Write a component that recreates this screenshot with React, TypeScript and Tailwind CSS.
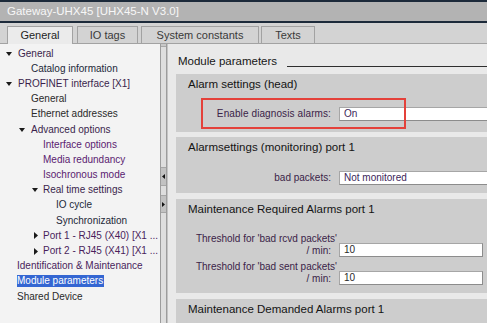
import React from "react";

const Down = () => (
  <svg width="6" height="4" viewBox="0 0 6 4" className="block">
    <polygon points="0,0 6,0 3,4" fill="#1a1a1a" />
  </svg>
);
const Right = () => (
  <svg width="4" height="7" viewBox="0 0 4 7" className="block">
    <polygon points="0,0 4,3.5 0,7" fill="#1a1a1a" />
  </svg>
);

type RowProps = {
  pad: string;
  arrow?: "down" | "right";
  arrowW?: string;
  text: string;
  color: string;
  selected?: boolean;
};

function Row({ pad, arrow, arrowW, text, color, selected }: RowProps) {
  return (
    <div className={`flex items-center h-[15.2px] whitespace-nowrap ${pad}`}>
      {arrow && (
        <span className={`flex items-center shrink-0 ${arrowW}`}>
          {arrow === "down" ? <Down /> : <Right />}
        </span>
      )}
      {selected ? (
        <span className="bg-[#3466d2] text-white leading-[12px] h-[12px] pr-[1px]">{text}</span>
      ) : (
        <span className={color}>{text}</span>
      )}
    </div>
  );
}

function Input({ value, w, color }: { value: string; w: string; color: string }) {
  return (
    <div
      className={`h-[14px] ${w} bg-white border border-[#a6a6a6] border-b-[#8c8c8c] border-r-[#8c8c8c] flex items-center pl-[4px] text-[10px] leading-[12px] shrink-0 ${color}`}
    >
      {value}
    </div>
  );
}

export default function App() {
  return (
    <div className="w-[487px] h-[323px] overflow-hidden flex flex-col bg-[#e9e9e9] font-['Liberation_Sans',Arial,sans-serif]">
      {/* title bar */}
      <div className="h-[23px] shrink-0 border-t-2 border-b-2 border-[#1c2a3a] bg-[#b3b3b3] flex items-center pl-[7px] text-[11.5px] text-[#f7f7f7]">
        Gateway-UHX45 [UHX45-N V3.0]
      </div>
      {/* tabs */}
      <div className="h-[21px] shrink-0 bg-[#d3d3d3] border-b border-[#a2a2a2] flex items-end pl-[7px] text-[11px] text-[#1e1e1e]">
        <div className="w-[66px] h-[18px] -mb-px bg-[#ebebeb] border border-b-0 border-[#a2a2a2] flex items-center justify-center relative z-10">
          General
        </div>
        <div className="ml-[4px] w-[61px] h-[17px] border border-b-0 border-[#a2a2a2] flex items-center justify-center text-[#3a3a3a]">
          IO tags
        </div>
        <div className="ml-[3px] w-[118px] h-[17px] border border-b-0 border-[#a2a2a2] flex items-center justify-center text-[#3a3a3a]">
          System constants
        </div>
        <div className="ml-[2px] w-[54px] h-[17px] border border-b-0 border-[#a2a2a2] flex items-center justify-center text-[#3a3a3a]">
          Texts
        </div>
      </div>
      {/* body */}
      <div className="flex flex-1 min-h-0">
        {/* tree */}
        <div className="w-[160px] shrink-0 bg-[#f3f3f3] pt-[2px] text-[10px] leading-[12px] overflow-hidden">
          <Row pad="pl-[6px]" arrow="down" arrowW="w-[12px]" text="General" color="text-[#3a1f4c]" />
          <Row pad="pl-[31px]" text="Catalog information" color="text-[#1c2838]" />
          <Row pad="pl-[6px]" arrow="down" arrowW="w-[12px]" text="PROFINET interface [X1]" color="text-[#3a1f4c]" />
          <Row pad="pl-[31px]" text="General" color="text-[#2a2a2a]" />
          <Row pad="pl-[31px]" text="Ethernet addresses" color="text-[#2a2a2a]" />
          <Row pad="pl-[19px]" arrow="down" arrowW="w-[12px]" text="Advanced options" color="text-[#3a1f4c]" />
          <Row pad="pl-[43px]" text="Interface options" color="text-[#5a2170]" />
          <Row pad="pl-[43px]" text="Media redundancy" color="text-[#5a2170]" />
          <Row pad="pl-[43px]" text="Isochronous mode" color="text-[#5a2170]" />
          <Row pad="pl-[32px]" arrow="down" arrowW="w-[11px]" text="Real time settings" color="text-[#3a1f4c]" />
          <Row pad="pl-[56px]" text="IO cycle" color="text-[#1c2838]" />
          <Row pad="pl-[56px]" text="Synchronization" color="text-[#1c2838]" />
          <Row pad="pl-[34px]" arrow="right" arrowW="w-[9px]" text="Port 1 - RJ45 (X40) [X1 ..." color="text-[#4a1e5c]" />
          <Row pad="pl-[34px]" arrow="right" arrowW="w-[9px]" text="Port 2 - RJ45 (X41) [X1 ..." color="text-[#4a1e5c]" />
          <Row pad="pl-[17px]" text="Identification & Maintenance" color="text-[#4a1e5c]" />
          <Row pad="pl-[17px]" text="Module parameters" color="" selected />
          <Row pad="pl-[17px]" text="Shared Device" color="text-[#2a2a2a]" />
        </div>
        {/* splitter */}
        <div className="w-[7px] shrink-0 border-l border-r border-[#9c9c9c] bg-[#dedede] flex flex-col">
          <div className="h-[3px] bg-[#c8c8c8] border-b border-[#a8a8a8]" />
          <div className="mt-[120px] h-[19px] bg-[#c2c2c2] border-y border-[#a6a6a6] flex items-center justify-center">
            <svg width="3" height="5" viewBox="0 0 3 5">
              <polygon points="3,0 0,2.5 3,5" fill="#111" />
            </svg>
          </div>
          <div className="mt-[9px] h-[18px] bg-[#c2c2c2] border-y border-[#a6a6a6] flex items-center justify-center">
            <svg width="3" height="5" viewBox="0 0 3 5">
              <polygon points="0,0 3,2.5 0,5" fill="#111" />
            </svg>
          </div>
        </div>
        {/* right panel */}
        <div className="flex-1 min-w-0 relative overflow-hidden bg-[#e9e9e9] border-l border-[#c4c4c4]">
          <div className="flex items-end pl-[10px] pt-[11px]">
            <span className="text-[11.5px] leading-[13px] text-[#161616] whitespace-nowrap">Module parameters</span>
            <div className="flex-1 ml-[10px] mb-[1px] h-[1.5px] bg-[#2e2e2e]" />
          </div>
          <div className="ml-[8px] mt-[6px] w-[330px] text-[10px] leading-[12px] text-[#3a2348]">
            {/* section 1 */}
            <div className="h-[58px] bg-[#cdcdcd] pt-[4px] pl-[12px]">
              <div className="text-[11.5px] leading-[13px] text-[#141414]">Alarm settings (head)</div>
              <div className="mt-[16px] flex items-center -ml-[12px]">
                <div className="w-[155px] text-right tracking-[0.1px]">Enable diagnosis alarms:</div>
                <div className="ml-[8px]">
                  <Input value="On" w="w-[160px]" color="text-[#3c1f5a]" />
                </div>
              </div>
            </div>
            {/* section 2 */}
            <div className="mt-[5px] h-[56px] bg-[#cdcdcd] pt-[4px] pl-[12px]">
              <div className="text-[11.5px] leading-[13px] text-[#141414]">Alarmsettings (monitoring) port 1</div>
              <div className="mt-[17px] flex items-center -ml-[12px]">
                <div className="w-[155px] text-right">bad packets:</div>
                <div className="ml-[8px]">
                  <Input value="Not monitored" w="w-[160px]" color="text-[#3c1f5a]" />
                </div>
              </div>
            </div>
            {/* section 3 */}
            <div className="mt-[6px] h-[94px] bg-[#cdcdcd] pt-[4px] pl-[12px]">
              <div className="text-[11.5px] leading-[13px] text-[#141414]">Maintenance Required Alarms port 1</div>
              <div className="mt-[17px] flex items-end -ml-[12px]">
                <div className="w-[155px] flex flex-col items-end">
                  <span className="-mr-[6px] whitespace-nowrap">Threshold for 'bad rcvd packets'</span>
                  <span>/ min:</span>
                </div>
                <div className="ml-[8px]">
                  <Input value="10" w="w-[144px]" color="text-[#2a2a2a]" />
                </div>
              </div>
              <div className="mt-[4px] flex items-end -ml-[12px]">
                <div className="w-[155px] flex flex-col items-end">
                  <span className="-mr-[6px] whitespace-nowrap">Threshold for 'bad sent packets'</span>
                  <span>/ min:</span>
                </div>
                <div className="ml-[8px]">
                  <Input value="10" w="w-[144px]" color="text-[#2a2a2a]" />
                </div>
              </div>
            </div>
            {/* section 4 */}
            <div className="mt-[6px] h-[40px] bg-[#cdcdcd] pt-[4px] pl-[12px]">
              <div className="text-[11.5px] leading-[13px] text-[#141414]">Maintenance Demanded Alarms port 1</div>
            </div>
          </div>
          {/* annotation */}
          <div className="absolute left-[33px] top-[54px] w-[205px] h-[31px] border-2 border-[#e4413a]" />
        </div>
      </div>
    </div>
  );
}
